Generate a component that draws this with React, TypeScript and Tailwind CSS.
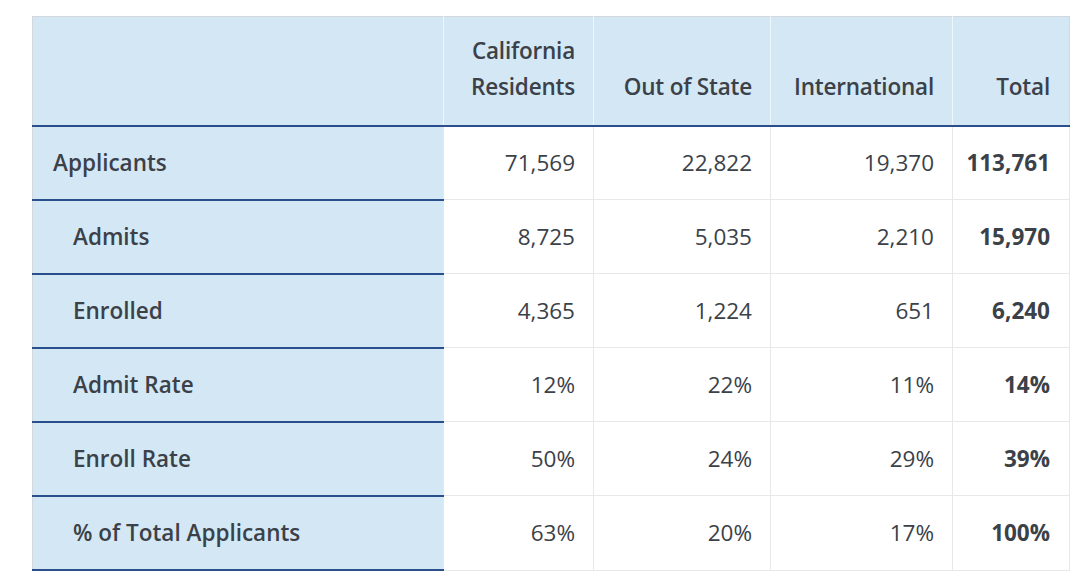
const rows = [
  { label: "Applicants", indent: false, values: ["71,569", "22,822", "19,370", "113,761"] },
  { label: "Admits", indent: true, values: ["8,725", "5,035", "2,210", "15,970"] },
  { label: "Enrolled", indent: true, values: ["4,365", "1,224", "651", "6,240"] },
  { label: "Admit Rate", indent: true, values: ["12%", "22%", "11%", "14%"] },
  { label: "Enroll Rate", indent: true, values: ["50%", "24%", "29%", "39%"] },
  { label: "% of Total Applicants", indent: true, values: ["63%", "20%", "17%", "100%"] },
]

export default function App() {
  return (
    <div className="w-[1080px] h-[580px] bg-white pt-[16px] pl-[32px] font-['Open_Sans',sans-serif] text-[#3b4148]">
      <table className="border-collapse table-fixed w-[1037px] border-l border-t border-r border-[#d3d8dd]">
        <colgroup>
          <col className="w-[411px]" />
          <col className="w-[150px]" />
          <col className="w-[177px]" />
          <col className="w-[182px]" />
          <col className="w-[117px]" />
        </colgroup>
        <thead>
          <tr className="h-[109px] bg-[#d4e7f5] border-b-2 border-[#2a4f8c]">
            <th className="border-r border-[#eef5fb]"></th>
            <th className="align-bottom text-right pr-[18px] pb-[20px] text-[22.5px] tracking-[-0.2px] font-semibold leading-[36px] border-r border-[#eef5fb]">
              California<br />Residents
            </th>
            <th className="align-bottom text-right pr-[18px] pb-[20px] text-[22.5px] tracking-[-0.2px] font-semibold leading-[36px] border-r border-[#eef5fb]">
              Out of State
            </th>
            <th className="align-bottom text-right pr-[18px] pb-[20px] text-[22.5px] tracking-[-0.2px] font-semibold leading-[36px] border-r border-[#eef5fb]">
              International
            </th>
            <th className="align-bottom text-right pr-[19px] pb-[20px] text-[22.5px] tracking-[-0.2px] font-semibold leading-[36px]">
              Total
            </th>
          </tr>
        </thead>
        <tbody>
          {rows.map((row) => (
            <tr key={row.label} className="h-[74.1px]">
              <td
                className={`bg-[#d4e7f5] border-b-2 border-[#2a4f8c] border-r border-r-[#e4e8ec] text-[22.5px] font-semibold ${
                  row.indent ? "pl-[40px]" : "pl-[20px]"
                }`}
              >
                {row.label}
              </td>
              {row.values.map((v, i) => (
                <td
                  key={i}
                  className={`text-right text-[22.5px] border-b border-r border-[#e6e8ea] ${
                    i === 3 ? "font-bold pr-[19px]" : "pr-[18px]"
                  }`}
                >
                  {v}
                </td>
              ))}
            </tr>
          ))}
        </tbody>
      </table>
    </div>
  )
}
